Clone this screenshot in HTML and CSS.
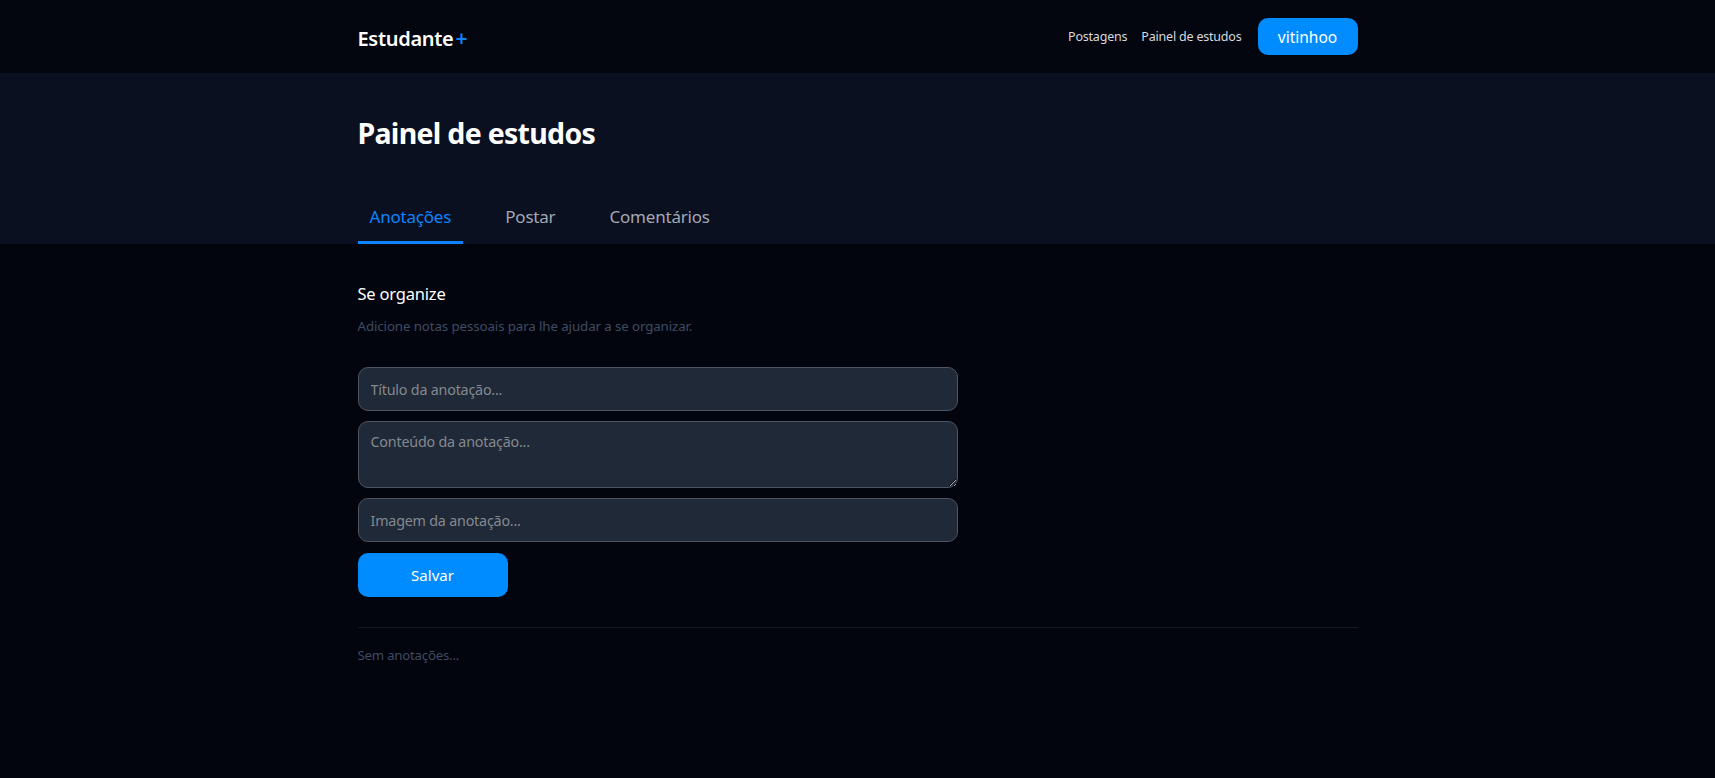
FILE: index.html
```html
<!DOCTYPE html>
<html lang="pt-BR">
<head>
<meta charset="utf-8">
<title>Painel de estudos</title>
<link rel="stylesheet" href="styles.css">
</head>
<body>
<header class="topbar">
  <div class="container topbar-inner">
    <div class="logo">Estudante<span class="plus">+</span></div>
    <nav class="nav">
      <a class="nav-link" href="#">Postagens</a>
      <a class="nav-link" href="#">Painel de estudos</a>
      <button class="user-btn">vitinhoo</button>
    </nav>
  </div>
</header>
<section class="hero">
  <div class="container">
    <h1 class="hero-title">Painel de estudos</h1>
    <div class="tabs">
      <div class="tab active">Anotações</div>
      <div class="tab">Postar</div>
      <div class="tab">Comentários</div>
    </div>
  </div>
</section>
<main class="content">
  <div class="container">
    <h2 class="section-title">Se organize</h2>
    <p class="section-sub">Adicione notas pessoais para lhe ajudar a se organizar.</p>
    <form class="note-form">
      <input class="field" type="text" placeholder="Título da anotação...">
      <textarea class="field field-area" placeholder="Conteúdo da anotação..."></textarea>
      <input class="field" type="text" placeholder="Imagem da anotação...">
      <button class="save-btn" type="button">Salvar</button>
    </form>
    <hr class="divider">
    <p class="empty">Sem anotações...</p>
  </div>
</main>
</body>
</html>
```

FILE: styles.css
```css
* { box-sizing: border-box; }
html, body { margin: 0; padding: 0; }
body {
  background: #02050d;
  color: #ffffff;
  font-family: "Noto Sans", "Open Sans", sans-serif;
  min-height: 778px;
}
.container {
  width: 1000px;
  margin: 0 auto;
}
.topbar {
  background: #03060e;
  height: 73px;
}
.topbar-inner {
  height: 73px;
  display: flex;
  align-items: center;
  justify-content: space-between;
}
.logo {
  font-size: 20px;
  font-weight: 600;
  letter-spacing: -0.3px;
  color: #ffffff;
  padding-top: 2px;
}
.plus {
  color: #0a84ff;
  margin-left: 2px;
  font-size: 21px;
}
.nav {
  display: flex;
  align-items: center;
  gap: 14px;
}
.nav-link {
  color: #d6d9df;
  text-decoration: none;
  font-size: 12.5px;
  letter-spacing: -0.2px;
}
.user-btn {
  margin-left: 2px;
  width: 100px;
  height: 37px;
  border: none;
  border-radius: 10px;
  background: #008cff;
  color: #ffffff;
  font-family: inherit;
  font-size: 15.5px;
  cursor: pointer;
}
.hero {
  background: #0a1020;
  padding-top: 42px;
}
.hero-title {
  margin: 0;
  font-size: 28.5px;
  line-height: 36px;
  font-weight: 700;
  letter-spacing: -0.7px;
}
.tabs {
  display: flex;
  gap: 30px;
  margin-top: 42px;
}
.tab {
  padding: 12px 12px 12px;
  line-height: 24px;
  font-size: 17px;
  color: #a3a8b2;
  border-bottom: 3px solid transparent;
  letter-spacing: -0.2px;
}
.tab.active {
  color: #0a84ff;
  border-bottom-color: #0a84ff;
}
.content {
  padding-top: 38px;
}
.section-title {
  margin: 0;
  font-size: 16.5px;
  font-weight: 400;
  line-height: 24px;
  letter-spacing: -0.2px;
}
.section-sub {
  margin: 10px 0 0;
  font-size: 13.3px;
  line-height: 20px;
  color: #3f4b63;
  letter-spacing: -0.1px;
}
.note-form {
  margin-top: 31px;
  display: flex;
  flex-direction: column;
  align-items: flex-start;
  gap: 10px;
}
.field {
  width: 600px;
  height: 44px;
  background: #1f2937;
  border: 1px solid #4b5563;
  border-radius: 10px;
  padding: 0 12px;
  color: #ffffff;
  font-family: inherit;
  font-size: 14.3px;
  outline: none;
}
.field::placeholder { color: #85888f; letter-spacing: -0.2px; }
.field-area {
  height: 67px;
  padding: 10px 12px;
  resize: vertical;
  display: block;
}
.save-btn {
  margin-top: 1px;
  width: 150px;
  height: 44px;
  border: none;
  border-radius: 10px;
  background: #008cff;
  color: #ffffff;
  font-family: inherit;
  font-size: 15px;
  cursor: pointer;
}
.divider {
  margin: 30px 0 0;
  border: none;
  border-top: 1px solid #121826;
}
.empty {
  margin: 18px 0 0;
  font-size: 13.2px;
  color: #3f4b63;
  letter-spacing: -0.2px;
}
```
